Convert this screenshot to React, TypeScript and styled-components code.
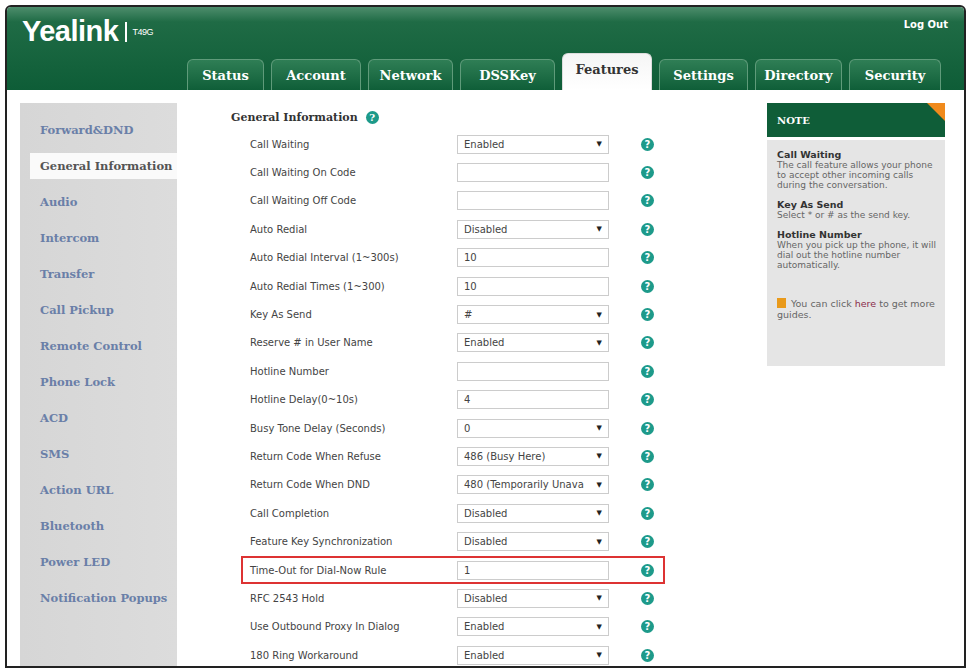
import React from "react";
import styled, { createGlobalStyle } from "styled-components";

const G = createGlobalStyle`
  body { margin:0; background:#fff; font-family:"DejaVu Sans", Verdana, sans-serif; }
`;
const Frame = styled.div`
  position:relative; margin:5px 5px 0 5px; width:957px; height:659px; border:2px solid #222;
  border-radius:6px 6px 0 0; overflow:hidden; background:#fff; display:flex; flex-direction:column;
`;
const Header = styled.div`
  height:83px; background:linear-gradient(#4d8d6c 0%, #1f6b45 18%, #0e5d37 100%);
  display:flex; align-items:flex-end; position:relative; flex-shrink:0;
`;
const Logo = styled.div`
  position:absolute; left:15px; top:8px; color:#fff; font-family:"Liberation Sans",Arial,sans-serif;
  font-weight:bold; font-size:29px; letter-spacing:-0.5px; display:flex; align-items:center;
  span { font-size:9px; border-left:2px solid #fff; margin-left:7px; padding-left:5px; height:20px; display:flex; align-items:center; font-weight:normal; }
`;
const LogOut = styled.div`
  position:absolute; right:16px; top:12px; color:#fff; font-size:10px; font-weight:bold;
`;
const Tabs = styled.div`display:flex; gap:7px; margin-left:180px; align-items:flex-end;`;
const Tab = styled.div<{ $w: number; $a?: boolean }>`
  width:${p => p.$w}px; height:${p => (p.$a ? 37 : 31)}px; border-radius:6px 6px 0 0;
  border:1px solid ${p => (p.$a ? "#ddd" : "#5f9b7a")}; border-bottom:none; box-sizing:border-box;
  background:${p => (p.$a ? "linear-gradient(#f5f5f5,#fff)" : "linear-gradient(#2f7e55,#0f5e38)")};
  color:${p => (p.$a ? "#333" : "#fff")}; font-family:"DejaVu Serif",Georgia,serif; font-weight:bold;
  font-size:13px; display:flex; align-items:center; justify-content:center; padding-bottom:${p => (p.$a ? 6 : 0)}px;
`;
const Body = styled.div`display:flex; flex:1; padding-top:13px; padding-left:13px;`;
const Side = styled.div`
  width:157px; background:linear-gradient(90deg,#d6d6d6,#dcdcdc); display:flex; flex-direction:column; padding-top:9px;
`;
const SideItem = styled.div<{ $a?: boolean }>`
  height:36px; display:flex; align-items:center; font-family:"DejaVu Serif",Georgia,serif; font-weight:bold;
  font-size:11.5px; color:${p => (p.$a ? "#555" : "#6a7fa8")}; padding-left:${p => (p.$a ? 10 : 20)}px;
  ${p => p.$a ? "background:#fafafa; height:26px; margin:5px 0 5px 10px;" : ""}
`;
const Main = styled.div`flex:1; padding:0 0 0 54px; display:flex; flex-direction:column;`;
const Title = styled.div`
  font-family:"DejaVu Serif",Georgia,serif; font-weight:bold; font-size:11px; color:#333; height:26px;
  display:flex; align-items:center; gap:8px; margin-top:1px;
`;
const Row = styled.div<{ $hl?: boolean }>`
  height:28.4px; display:grid; grid-template-columns:207px 152px 45px; align-items:center;
  font-size:10px; color:#444; padding-left:19px; width:404px; position:relative;
  ${p => p.$hl ? "outline:2px solid #d33; outline-offset:-2px; margin-left:10px; padding:0 11px 0 9px;" : ""}
`;
const Field = styled.div`
  height:19px; border:1px solid #ccc; background:#fff; font-size:10px; color:#444; display:flex;
  align-items:center; justify-content:space-between; padding:0 6px; box-sizing:border-box; width:152px;
  b { font-size:7px; color:#222; }
`;
const Help = styled.div`
  width:13px; height:13px; border-radius:50%; background:#1d9a8a; color:#fff; font-size:10px; font-weight:bold;
  display:flex; align-items:center; justify-content:center; justify-self:end;
`;
const Note = styled.div`width:178px; margin-right:19px; display:flex; flex-direction:column;`;
const NoteHead = styled.div`
  height:34px; background:#0f5d38; color:#fff; font-family:"DejaVu Serif",Georgia,serif; font-weight:bold;
  font-size:10px; display:flex; align-items:center; padding-left:10px; position:relative;
  &::after { content:""; position:absolute; right:0; top:0; border-style:solid; border-width:0 18px 18px 0; border-color:transparent #f08a1c transparent transparent; }
`;
const NoteBody = styled.div`
  background:#e5e5e5; margin-top:3px; padding:10px 8px 46px 10px; font-size:9px; color:#666; line-height:10px;
  p { margin:0 0 10px; } strong { color:#333; display:block; font-size:9.5px; }
`;
const Guide = styled.div`
  margin-top:28px; font-size:9.5px; color:#666; line-height:11px;
  i { display:inline-block; width:9px; height:10px; background:#e99a1b; margin-right:5px; vertical-align:-1px; }
  em { font-style:normal; color:#8a2b4a; }
`;

const rows: [string, string, boolean][] = [
  ["Call Waiting", "Enabled", true], ["Call Waiting On Code", "", false], ["Call Waiting Off Code", "", false],
  ["Auto Redial", "Disabled", true], ["Auto Redial Interval (1~300s)", "10", false], ["Auto Redial Times (1~300)", "10", false],
  ["Key As Send", "#", true], ["Reserve # in User Name", "Enabled", true], ["Hotline Number", "", false],
  ["Hotline Delay(0~10s)", "4", false], ["Busy Tone Delay (Seconds)", "0", true], ["Return Code When Refuse", "486 (Busy Here)", true],
  ["Return Code When DND", "480 (Temporarily Unava", true], ["Call Completion", "Disabled", true],
  ["Feature Key Synchronization", "Disabled", true], ["Time-Out for Dial-Now Rule", "1", false],
  ["RFC 2543 Hold", "Disabled", true], ["Use Outbound Proxy In Dialog", "Enabled", true], ["180 Ring Workaround", "Enabled", true],
];
const side = ["Forward&DND", "General Information", "Audio", "Intercom", "Transfer", "Call Pickup", "Remote Control", "Phone Lock", "ACD", "SMS", "Action URL", "Bluetooth", "Power LED", "Notification Popups"];
const tabs: [string, number][] = [["Status", 77], ["Account", 90], ["Network", 85], ["DSSKey", 95], ["Features", 90], ["Settings", 89], ["Directory", 87], ["Security", 92]];

export default function App() {
  return (
    <>
      <G />
      <Frame>
        <Header>
          <Logo>Yealink<span>T49G</span></Logo>
          <LogOut>Log Out</LogOut>
          <Tabs>{tabs.map(([t, w]) => <Tab key={t} $w={w} $a={t === "Features"}>{t}</Tab>)}</Tabs>
        </Header>
        <Body>
          <Side>{side.map(s => <SideItem key={s} $a={s === "General Information"}>{s}</SideItem>)}</Side>
          <Main>
            <Title>General Information <Help>?</Help></Title>
            {rows.map(([l, v, sel]) => (
              <Row key={l} $hl={l.startsWith("Time-Out")}>
                <span>{l}</span>
                <Field><span>{v}</span>{sel && <b>▼</b>}</Field>
                <Help>?</Help>
              </Row>
            ))}
          </Main>
          <Note>
            <NoteHead>NOTE</NoteHead>
            <NoteBody>
              <p><strong>Call Waiting</strong>The call feature allows your phone to accept other incoming calls during the conversation.</p>
              <p><strong>Key As Send</strong>Select * or # as the send key.</p>
              <p><strong>Hotline Number</strong>When you pick up the phone, it will dial out the hotline number automatically.</p>
              <Guide><i />You can click <em>here</em> to get more guides.</Guide>
            </NoteBody>
          </Note>
        </Body>
      </Frame>
    </>
  );
}
